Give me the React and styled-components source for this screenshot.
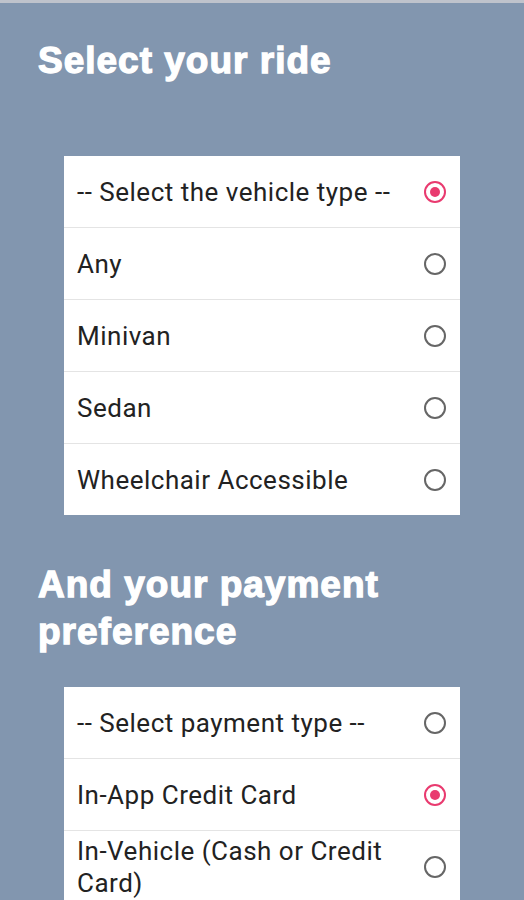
import React from 'react'
import styled, { createGlobalStyle } from 'styled-components'

const GlobalStyle = createGlobalStyle`
    html, body {
        margin: 0;
        padding: 0;
        background: #8296af;
    }
`

const vehicleTypes = [
    '-- Select the vehicle type --',
    'Any',
    'Minivan',
    'Sedan',
    'Wheelchair Accessible',
]

const paymentTypes = [
    '-- Select payment type --',
    'In-App Credit Card',
    'In-Vehicle (Cash or Credit Card)',
]

const OptionList = ({ options, selected }) => (
    <Card>
        {options.map((label, i) => (
            <Option key={label}>
                <Label>{label}</Label>
                <Radio checked={i === selected} />
            </Option>
        ))}
    </Card>
)

const App = () => (
    <Screen>
        <GlobalStyle />
        <TopBar />
        <Heading $top={34} $bottom={72}>Select your ride</Heading>
        <OptionList options={vehicleTypes} selected={0} />
        <Heading $top={46} $bottom={32}>And your payment preference</Heading>
        <OptionList options={paymentTypes} selected={1} />
    </Screen>
)

const Screen = styled.div`
    width: 524px;
    height: 900px;
    overflow: hidden;
    background: #8296af;
    font-family: Roboto, 'Liberation Sans', sans-serif;
`

const TopBar = styled.div`
    height: 3px;
    background: #bfc3cc;
`

const Heading = styled.h1`
    margin: ${(p) => p.$top}px 40px ${(p) => p.$bottom}px 38px;
    font-family: 'Liberation Sans', Arial, sans-serif;
    font-size: 37px;
    line-height: 47px;
    font-weight: 700;
    letter-spacing: 1px;
    color: #fff;
    -webkit-text-stroke: 1.3px #fff;
`

const Card = styled.div`
    margin: 0 64px;
    background: #fff;
`

const Option = styled.div`
    display: flex;
    align-items: center;
    justify-content: space-between;
    gap: 16px;
    min-height: 71px;
    padding: 0 14px 0 13px;
    border-bottom: 1px solid #e4e4e4;

    &:last-child {
        border-bottom: 0;
    }
`

const Label = styled.span`
    font-size: 26px;
    line-height: 32px;
    letter-spacing: 0.5px;
    color: #222;
`

const Radio = styled.span`
    flex: none;
    width: 18px;
    height: 18px;
    border-radius: 50%;
    border: 2px solid ${(p) => (p.checked ? '#e93a6f' : '#666')};
    display: flex;
    align-items: center;
    justify-content: center;

    &::after {
        content: '';
        width: 10px;
        height: 10px;
        border-radius: 50%;
        background: #e93a6f;
        display: ${(p) => (p.checked ? 'block' : 'none')};
    }
`

export default App
